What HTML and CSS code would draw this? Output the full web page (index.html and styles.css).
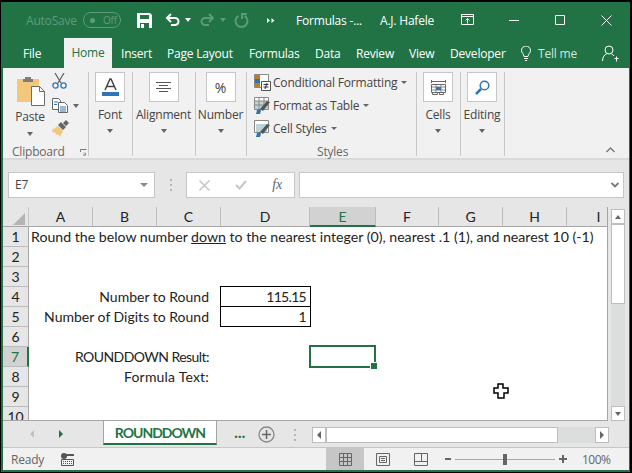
FILE: index.html
```html
<!DOCTYPE html>
<html lang="en">
<head>
    <meta charset="UTF-8">
    <title>Formulas - Excel</title>
    <link rel="stylesheet" href="styles.css">
</head>
<body>
<div class="window">

    <div class="titlebar">
        <span class="autosave">AutoSave</span>
        <span class="toggle"><i class="toggle-dot"></i>Off</span>
        <svg class="qat-save" width="15" height="15" viewBox="0 0 15 15"><path fill="#fff" d="M0 0h13l2 2v13H0z"/><path fill="#217346" d="M3 2h9v4H3zM3 10h9v5H3z"/><path fill="#fff" d="M4 11h3v4H4z"/></svg>
        <svg class="qat-undo" width="15" height="14" viewBox="0 0 15 14"><path fill="none" stroke="#fff" stroke-width="2" d="M2 5h8a3.5 3.5 0 0 1 0 7H6"/><path fill="none" stroke="#fff" stroke-width="2" d="M6 1L2 5l4 4"/></svg>
        <i class="caret white qat-caret"></i>
        <svg class="qat-redo" width="15" height="14" viewBox="0 0 15 14"><path fill="none" stroke="#5c9a78" stroke-width="2" d="M13 5H5a3.5 3.5 0 0 0 0 7h4"/><path fill="none" stroke="#5c9a78" stroke-width="2" d="M9 1l4 4-4 4"/></svg>
        <i class="caret dim qat-caret"></i>
        <svg class="qat-repeat" width="15" height="15" viewBox="0 0 15 15"><path fill="none" stroke="#5c9a78" stroke-width="2" d="M10.5 2.8a6 6 0 1 1-6 0"/><path fill="#5c9a78" d="M7 0h6v2H9v4H7z"/></svg>
        <svg class="qat-more" width="8" height="7" viewBox="0 0 8 7"><path fill="#fff" d="M0 1l3 2.5L0 6zM4.5 1l3 2.5-3 2.5z"/></svg>
        <span class="doc-name">Formulas -...</span>
        <span class="user-name">A.J. Hafele</span>
        <svg class="win-ribbon" width="14" height="12" viewBox="0 0 14 12"><path fill="none" stroke="#fff" d="M.5.5h12v10H.5zM.5 2.5h12M6.5 9.5V4.5M4.5 6.5l2-2 2 2"/></svg>
        <svg class="win-min" width="10" height="10" viewBox="0 0 10 10"><path stroke="#fff" d="M0 5.5h10"/></svg>
        <svg class="win-max" width="11" height="11" viewBox="0 0 11 11"><path fill="none" stroke="#fff" d="M.5.5h9v9h-9z"/></svg>
        <svg class="win-close" width="11" height="11" viewBox="0 0 11 11"><path stroke="#fff" d="M.5.5l10 10M10.5.5l-10 10"/></svg>
    </div>

    <div class="tabs">
        <span class="tab tab-file">File</span>
        <span class="tab tab-home">Home</span>
        <span class="tab tab-insert">Insert</span>
        <span class="tab tab-layout">Page Layout</span>
        <span class="tab tab-formulas">Formulas</span>
        <span class="tab tab-data">Data</span>
        <span class="tab tab-review">Review</span>
        <span class="tab tab-view">View</span>
        <span class="tab tab-dev">Developer</span>
        <svg class="bulb" width="10" height="15" viewBox="0 0 10 15"><path fill="none" stroke="#fff" d="M3 10.5C3 8 .5 7 .5 4.5a4.5 4.5 0 0 1 9 0C9.5 7 7 8 7 10.5zM3 12.5h4M4 14.5h2"/></svg>
        <span class="tab tab-tell">Tell me</span>
        <svg class="share" width="17" height="17" viewBox="0 0 17 17"><circle cx="7" cy="5" r="4" fill="none" stroke="#fff"/><path fill="none" stroke="#fff" d="M.5 16c0-4 2-6.5 4-7M9.5 9c1 .3 2 1 2.5 2M12.5 13.5h4M14.5 11.5v5"/></svg>
    </div>

    <div class="ribbon">
        <div class="group group-clip">
            <div class="clip-body">
                <div class="paste">
                    <svg width="29" height="30" viewBox="0 0 29 30">
                        <path fill="#f3c77c" d="M1 3h22v23H1z"/>
                        <path fill="#7d7d7d" d="M7 3h2V1h6v2h2v3H7z"/>
                        <path fill="#fff" stroke="#6d6d6d" d="M15.5 10.5h8l5 5v14h-13z"/>
                        <path fill="none" stroke="#6d6d6d" d="M23.5 10.5v5h5"/>
                    </svg>
                    <span class="paste-label">Paste</span>
                    <i class="caret"></i>
                </div>
                <div class="clip-tools">
                    <svg width="15" height="16" viewBox="0 0 15 16"><path fill="none" stroke="#666" stroke-width="1.3" d="M3 0l6 10M12 0L6 10"/><circle cx="3.5" cy="12.5" r="2.6" fill="none" stroke="#2e75b5" stroke-width="1.3"/><circle cx="11.5" cy="12.5" r="2.6" fill="none" stroke="#2e75b5" stroke-width="1.3"/></svg>
                    <div class="copy-row">
                        <svg width="16" height="15" viewBox="0 0 16 15"><path fill="#fff" stroke="#666" d="M.5.5h6l2 2v9h-8z"/><path fill="#fff" stroke="#666" d="M6.5 4.5h6l3 3v7h-9z"/><path stroke="#2e75b5" d="M2 4h4M2 6.5h3M8 9h6M8 11h6M8 13h6"/></svg>
                        <i class="caret copy-caret"></i>
                    </div>
                    <svg width="17" height="17" viewBox="0 0 17 17"><path fill="#f3c77c" d="M0 10l6-4 5 5-3 6-2-3-2 1-1-3-2 1z"/><path fill="#666" d="M6 5l3-3 5 5-3 3zM11 3l3-3 3 3-3 3z"/></svg>
                </div>
            </div>
            <div class="group-label clip-label">Clipboard<svg class="launcher" width="7" height="7" viewBox="0 0 7 7"><path fill="none" stroke="#777" d="M.5 3V.5H6.5"/><path fill="#777" d="M3 3l3 3V3.5L5 4.5 3.5 3zM6 6.5H3v-1h3z"/></svg></div>
        </div>

        <div class="group group-font">
            <div class="big-button">
                <svg width="17" height="18" viewBox="0 0 17 18"><path fill="none" stroke="#444" stroke-width="1.5" d="M3 12L8 1h1l5 11M5 8.5h7"/><path fill="#2e75b5" d="M0 14h17v4H0z"/></svg>
            </div>
            <span class="big-label">Font</span>
            <i class="caret"></i>
        </div>

        <div class="group group-align">
            <div class="big-button">
                <svg width="15" height="11" viewBox="0 0 15 11"><path stroke="#555" d="M0 .5h15M3 3.5h9M0 6.5h15M3 9.5h9"/></svg>
            </div>
            <span class="big-label">Alignment</span>
            <i class="caret"></i>
        </div>

        <div class="group group-number">
            <div class="big-button percent">%</div>
            <span class="big-label">Number</span>
            <i class="caret"></i>
        </div>

        <div class="group group-styles">
            <div class="style-row">
                <svg width="17" height="17" viewBox="0 0 17 17"><path fill="#fff" stroke="#888" d="M.5.5h14v13H.5z"/><path fill="#c8791f" d="M1 1h5v4H1zM1 9h5v4H1z"/><path fill="#2e75b5" d="M1 5h5v4H1z"/><path fill="#fff" stroke="#555" d="M7.5 7.5h9v9h-9z"/><path stroke="#333" d="M9.5 10.5h5M9.5 13h5M13 9l-2 6"/></svg>
                <span>Conditional Formatting</span><i class="caret"></i>
            </div>
            <div class="style-row">
                <svg width="17" height="17" viewBox="0 0 17 17"><path fill="#fff" stroke="#888" d="M.5.5h14v12H.5z"/><path fill="#bcd4d8" d="M1 4h13v8H1z"/><path stroke="#888" d="M5 1v11M10 1v11M1 4h13M1 8h13"/><path fill="#2e75b5" d="M2 17l1-4 3-1 1 2-1 3z"/><path fill="#555" d="M6 12l7-8 3 1-7 9z"/></svg>
                <span>Format as Table</span><i class="caret"></i>
            </div>
            <div class="style-row">
                <svg width="17" height="17" viewBox="0 0 17 17"><path fill="#fff" stroke="#888" d="M.5.5h14v12H.5z"/><path fill="#bcd4d8" d="M2 4h11v8H2z"/><path fill="#2e75b5" d="M2 17l1-4 3-1 1 2-1 3z"/><path fill="#555" d="M6 12l7-8 3 1-7 9z"/></svg>
                <span>Cell Styles</span><i class="caret"></i>
            </div>
            <div class="group-label styles-label">Styles</div>
        </div>

        <div class="group group-cells">
            <div class="big-button">
                <svg width="15" height="15" viewBox="0 0 15 15"><path stroke="#2e75b5" d="M.5 0v3M14.5 0v3M1 1.5h13"/><path fill="#fff" stroke="#666" d="M.5 4.5h14v8H.5z"/><path stroke="#888" d="M5 5v7M10 5v7M1 7h13M1 10h13"/><path fill="#2e75b5" d="M5 7h5v3H5z"/><path fill="none" stroke="#666" d="M1.5 12.5v2h5v-2M8.5 12.5v2h4v-2"/></svg>
            </div>
            <span class="big-label">Cells</span>
            <i class="caret"></i>
        </div>

        <div class="group group-edit">
            <div class="big-button">
                <svg width="15" height="15" viewBox="0 0 15 15"><circle cx="9.5" cy="5.5" r="4.3" fill="none" stroke="#2e75b5" stroke-width="1.5"/><path stroke="#2e75b5" stroke-width="2.5" d="M6 9l-5 5"/></svg>
            </div>
            <span class="big-label">Editing</span>
            <i class="caret"></i>
        </div>

        <div class="collapse">
            <svg width="9" height="6" viewBox="0 0 9 6"><path fill="none" stroke="#777" stroke-width="1.4" d="M.5 5l4-4 4 4"/></svg>
        </div>
    </div>

    <div class="formula-band">
        <div class="name-box">E7<i class="caret name-caret"></i></div>
        <div class="grip"></div>
        <div class="fx-box">
            <svg width="11" height="11" viewBox="0 0 11 11"><path stroke="#c6c6c6" stroke-width="1.5" d="M.5.5l10 10M10.5.5l-10 10"/></svg>
            <svg width="12" height="10" viewBox="0 0 12 10"><path fill="none" stroke="#c6c6c6" stroke-width="2" d="M1 5l3.5 3.5L11 1"/></svg>
            <span class="fx">fx</span>
        </div>
        <div class="formula-input">
            <svg width="8" height="6" viewBox="0 0 8 6"><path fill="none" stroke="#777" stroke-width="1.8" d="M.5 1L4 4.5 7.5 1"/></svg>
        </div>
    </div>

    <div class="sheet-area">
        <div class="sheet">
            <div class="corner"><i class="corner-mark"></i></div>
            <div class="col">A</div>
            <div class="col">B</div>
            <div class="col">C</div>
            <div class="col">D</div>
            <div class="col col-on">E</div>
            <div class="col">F</div>
            <div class="col">G</div>
            <div class="col">H</div>
            <div class="col">I</div>

            <div class="row">1</div>
            <div class="cell span-all heading">Round the below number <u>down</u> to the nearest integer (0), nearest .1 (1), and nearest 10 (-1)</div>

            <div class="row">2</div>
            <div class="cell span-all"></div>
            <div class="row">3</div>
            <div class="cell span-all"></div>

            <div class="row">4</div>
            <div class="cell label">Number to Round</div>
            <div class="cell boxed box-top">115.15</div>
            <div class="cell rest"></div>

            <div class="row">5</div>
            <div class="cell label">Number of Digits to Round</div>
            <div class="cell boxed">1</div>
            <div class="cell rest"></div>

            <div class="row">6</div>
            <div class="cell span-all"></div>

            <div class="row row-on">7</div>
            <div class="cell label caps">ROUNDDOWN Result:</div>
            <div class="cell"></div>
            <div class="cell active"><i class="handle"></i></div>
            <div class="cell rest-f"></div>

            <div class="row">8</div>
            <div class="cell label wide">Formula Text:</div>
            <div class="cell span-rest"></div>

            <div class="row">9</div>
            <div class="cell span-all"></div>
            <div class="row">10</div>
            <div class="cell span-all"></div>

            <svg class="pointer" width="16" height="16" viewBox="0 0 16 16"><path fill="#fff" stroke="#000" stroke-width="1.5" d="M5 1h5v4h5v5h-4v5H5v-5H1V5h4z"/></svg>
        </div>

        <div class="vscroll">
            <div class="sb-btn sb-up"><i class="caret up"></i></div>
            <div class="sb-thumb"></div>
            <div class="sb-btn sb-down"><i class="caret"></i></div>
        </div>
    </div>

    <div class="sheet-tabs">
        <i class="arrow-left dim-arrow"></i>
        <i class="arrow-right"></i>
        <div class="sheet-tab">ROUNDDOWN</div>
        <span class="more-tabs">...</span>
        <svg class="add-sheet" width="17" height="17" viewBox="0 0 17 17"><circle cx="8.5" cy="8.5" r="7.5" fill="none" stroke="#888" stroke-width="1.3"/><path stroke="#666" stroke-width="1.5" d="M8.5 4v9M4 8.5h9"/></svg>
        <div class="grip grip-tabs"></div>
        <div class="hscroll">
            <div class="hs-btn"><i class="arrow-left"></i></div>
            <div class="hs-thumb"></div>
            <div class="hs-btn hs-end"><i class="arrow-right"></i></div>
        </div>
    </div>

    <div class="status">
        <span class="ready">Ready</span>
        <svg class="macro" width="13" height="13" viewBox="0 0 13 13"><circle cx="3" cy="3" r="3" fill="#555"/><path fill="#555" d="M5 1h8v2H5z"/><path fill="none" stroke="#555" d="M.5 6.5h12v6H.5z"/><path stroke="#555" stroke-dasharray="1 1" d="M2 8.5h10M2 10.5h10"/></svg>
        <div class="view-on">
            <svg width="13" height="13" viewBox="0 0 13 13"><path fill="none" stroke="#666" d="M.5.5h12v12H.5zM4.5 1v12M8.5 1v12M1 4.5h12M1 8.5h12"/></svg>
        </div>
        <svg class="view-page" width="14" height="13" viewBox="0 0 14 13"><path fill="none" stroke="#666" d="M.5.5h13v12H.5zM3.5 3.5h7v6h-7zM5 5.5h4M5 7.5h4"/></svg>
        <svg class="view-break" width="14" height="13" viewBox="0 0 14 13"><path fill="none" stroke="#666" d="M.5.5h13v12H.5zM.5 8.5h13M7.5 1v7"/></svg>
        <span class="zoom-minus"></span>
        <div class="zoom-track"><i class="zoom-thumb"></i></div>
        <span class="zoom-plus"></span>
        <span class="zoom-value">100%</span>
    </div>

</div>
</body>
</html>
```

FILE: styles.css
```css
* {
    box-sizing: border-box;
}

body {
    margin: 0;
    width: 632px;
    height: 473px;
    background: #000;
    overflow: hidden;
    font-family: "Open Sans", "Noto Sans", sans-serif;
    font-size: 12px;
    letter-spacing: -0.2px;
    color: #444;
}

i {
    display: block;
}

svg {
    flex: none;
}

.window {
    margin: 2px 2px 0 1px;
    height: 470px;
    border-left: 2px solid #217346;
    border-right: 1px solid #217346;
    border-bottom: 2px solid #217346;
    display: flex;
    flex-direction: column;
    background: #e6e6e6;
}

.caret {
    width: 0;
    height: 0;
    border-left: 3.5px solid transparent;
    border-right: 3.5px solid transparent;
    border-top: 4px solid #666;
}

.caret.up {
    border-top: 0;
    border-bottom: 4px solid #666;
}

.caret.white {
    border-top-color: #fff;
}

.caret.dim {
    border-top-color: #5c9a78;
}

/* title bar */
.titlebar {
    height: 36px;
    flex: none;
    background: #217346;
    color: #fff;
    display: flex;
    align-items: center;
    padding-left: 23px;
    white-space: nowrap;
}

.autosave {
    color: #5f9a7a;
    width: 57px;
    flex: none;
}

.toggle {
    width: 38px;
    height: 16px;
    flex: none;
    border: 1px solid #5f9a7a;
    border-radius: 8px;
    color: #5f9a7a;
    font-size: 10px;
    line-height: 14px;
    display: flex;
    align-items: center;
    gap: 8px;
    padding-left: 6px;
}

.toggle-dot {
    width: 5px;
    height: 5px;
    border-radius: 50%;
    background: #5f9a7a;
}

.qat-save {
    margin-left: 16px;
}

.qat-undo {
    margin-left: 13px;
}

.qat-caret {
    margin-left: 5px;
}

.qat-redo {
    margin-left: 9px;
}

.qat-repeat {
    margin-left: 8px;
}

.qat-more {
    margin-left: 18px;
}

.doc-name {
    margin-left: 21px;
    width: 84px;
    flex: none;
}

.user-name {
    width: 81px;
    flex: none;
}

.win-min {
    margin-left: 34px;
}

.win-max {
    margin-left: 36px;
}

.win-close {
    margin-left: 35px;
}

/* ribbon tabs */
.tabs {
    height: 30px;
    flex: none;
    background: #217346;
    color: #fff;
    display: flex;
    align-items: center;
    white-space: nowrap;
}

.tab {
    display: block;
    flex: none;
    text-align: center;
}

.tab-file {
    margin-left: 20px;
    width: 18px;
}

.tab-home {
    margin-left: 23px;
    width: 48px;
    height: 30px;
    line-height: 30px;
    background: #f1f1f1;
    color: #217346;
}

.tab-insert {
    margin-left: 9px;
    width: 29px;
}

.tab-layout {
    margin-left: 17px;
    width: 65px;
}

.tab-formulas {
    margin-left: 17px;
    width: 49px;
}

.tab-data {
    margin-left: 17px;
    width: 24px;
}

.tab-review {
    margin-left: 17px;
    width: 37px;
}

.tab-view {
    margin-left: 16px;
    width: 25px;
}

.tab-dev {
    margin-left: 16px;
    width: 53px;
}

.bulb {
    margin-left: 18px;
}

.tab-tell {
    margin-left: 7px;
    width: 39px;
    color: #d5e5dc;
}

.share {
    margin-left: 25px;
}

/* ribbon */
.ribbon {
    height: 92px;
    flex: none;
    background: #f1f1f1;
    border-bottom: 2px solid #d9d9d9;
    display: flex;
    padding-top: 4px;
    color: #444;
}

.group {
    height: 84px;
    flex: none;
    border-right: 1px solid #c8c8c8;
    display: flex;
    flex-direction: column;
    align-items: center;
    padding-right: 1px;
}

.group-clip {
    width: 86px;
    align-items: flex-start;
}

.group-font,
.group-cells,
.group-edit {
    width: 44px;
}

.group-align {
    width: 63px;
}

.group-number {
    width: 51px;
}

.group-styles {
    width: 170px;
    align-items: flex-start;
    padding: 0 0 0 7px;
}

.big-button {
    width: 30px;
    height: 30px;
    flex: none;
    background: #fff;
    border: 1px solid #c6c6c6;
    display: flex;
    align-items: center;
    justify-content: center;
}

.percent {
    font-size: 14px;
}

.big-label {
    margin-top: 4px;
    line-height: 17px;
    white-space: nowrap;
}

.group .caret {
    flex: none;
}

.big-label + .caret {
    margin-top: 6px;
}

.clip-body {
    display: flex;
    flex: none;
    height: 72px;
    padding-left: 9px;
}

.paste {
    width: 36px;
    display: flex;
    flex-direction: column;
    align-items: center;
    padding-top: 4px;
}

.paste-label {
    line-height: 16px;
    margin-top: 3px;
}

.paste .caret {
    margin-top: 7px;
}

.clip-tools {
    display: flex;
    flex-direction: column;
    align-items: flex-start;
    margin-left: 4px;
    padding-top: 1px;
    gap: 8px;
}

.copy-row {
    display: flex;
    align-items: center;
    margin: 1px 0 -1px;
}

.copy-caret {
    margin-left: 5px;
}

.group-label {
    color: #666;
    line-height: 16px;
    flex: none;
}

.clip-label {
    width: 100%;
    padding-left: 9px;
    display: flex;
    align-items: center;
    gap: 15px;
}

.styles-label {
    margin: 4px 0 0 63px;
}

.style-row {
    height: 23px;
    flex: none;
    display: flex;
    align-items: center;
    gap: 2px;
    white-space: nowrap;
}

.style-row:first-child {
    margin-top: -1px;
}

.style-row .caret {
    margin-left: 2px;
    border-left-width: 3px;
    border-right-width: 3px;
    border-top-width: 3px;
}

.collapse {
    flex: 1;
    display: flex;
    justify-content: flex-end;
    align-items: flex-end;
    height: 84px;
    padding: 0 14px 3px 0;
}

/* formula bar */
.formula-band {
    height: 47px;
    flex: none;
    display: flex;
    align-items: flex-start;
    padding: 12px 5px 0 5px;
    background: #e6e6e6;
}

.name-box {
    width: 147px;
    height: 26px;
    background: #fff;
    border: 1px solid #c6c6c6;
    padding-left: 6px;
    line-height: 24px;
    font-size: 12px;
    color: #444;
    display: flex;
    align-items: center;
    justify-content: space-between;
    padding-right: 6px;
}

.name-caret {
    border-top-color: #888;
    border-left-width: 4px;
    border-right-width: 4px;
}

.grip {
    width: 2px;
    height: 12px;
    margin: 7px 14px 0 15px;
    background: repeating-linear-gradient(#b5b5b5 0 2px, transparent 2px 5px);
}

.fx-box {
    width: 109px;
    height: 26px;
    background: #fff;
    border: 1px solid #c6c6c6;
    display: flex;
    align-items: center;
    justify-content: space-between;
    padding: 0 12px;
}

.fx {
    font-family: "Liberation Serif", serif;
    font-style: italic;
    font-size: 14px;
    color: #666;
}

.formula-input {
    width: 325px;
    height: 26px;
    margin-left: 4px;
    background: #fff;
    border: 1px solid #c6c6c6;
    display: flex;
    align-items: center;
    justify-content: flex-end;
    padding-right: 4px;
}

/* sheet */
.sheet-area {
    height: 214px;
    flex: none;
    display: flex;
    align-items: stretch;
}

.sheet {
    position: relative;
    width: 605px;
    height: 214px;
    overflow: hidden;
    background: #fff;
    border-right: 1px solid #a6a6a6;
    border-bottom: 1px solid #a6a6a6;
    display: grid;
    grid-template-columns: 26px 64px 64px 64px 89px 66px 63px 64px 64px 64px;
    grid-auto-rows: 20px;
    font-family: Lato, "Liberation Sans", sans-serif;
    font-size: 14px;
    letter-spacing: 0;
    color: #222;
}

.corner {
    background: #e6e6e6;
    border-bottom: 1px solid #a6a6a6;
    border-right: 1px solid #c6c6c6;
    display: flex;
    justify-content: flex-end;
    align-items: flex-end;
    padding: 0 3px 1px 0;
}

.corner-mark {
    width: 0;
    height: 0;
    border-left: 12px solid transparent;
    border-bottom: 12px solid #b4b4b4;
}

.col {
    background: #e6e6e6;
    border-bottom: 1px solid #a6a6a6;
    border-right: 1px solid #bcbcbc;
    text-align: center;
    line-height: 19px;
}

.col-on {
    background: #d2d2d2;
    color: #217346;
    border-bottom: 2px solid #217346;
}

.row {
    background: #e6e6e6;
    border-bottom: 1px solid #bcbcbc;
    border-right: 1px solid #a6a6a6;
    text-align: center;
    line-height: 20px;
    grid-column: 1;
}

.row-on {
    background: #d2d2d2;
    color: #217346;
    border-right: 2px solid #217346;
}

.cell {
    line-height: 20px;
    white-space: nowrap;
    padding: 0 2px;
}

.heading {
    font-size: 14.15px;
}

.span-all {
    grid-column: 2 / -1;
}

.label {
    grid-column: 2 / 5;
    text-align: right;
    padding-right: 12px;
}

.caps {
    letter-spacing: -0.55px;
}

.wide {
    letter-spacing: 0.2px;
}

.boxed {
    grid-column: 5;
    border: 1px solid #000;
    border-top: 0;
    text-align: right;
    margin: 0 -1px 0 -1px;
    padding-right: 4px;
    letter-spacing: -0.7px;
}

.box-top {
    border-top: 1px solid #000;
    margin-top: -1px;
    height: 21px;
}

.rest {
    grid-column: 6 / -1;
}

.active {
    grid-column: 6;
    position: relative;
    border: 2px solid #217346;
    margin: -2px 0 0 -1px;
    height: 23px;
}

.handle {
    position: absolute;
    right: -3px;
    bottom: -3px;
    width: 6px;
    height: 6px;
    background: #217346;
    border: 1px solid #fff;
    box-sizing: content-box;
    margin: -1px;
}

.rest-f {
    grid-column: 7 / -1;
}

.span-rest {
    grid-column: 5 / -1;
}

.pointer {
    position: absolute;
    left: 490px;
    top: 176px;
}

/* scrollbars */
.vscroll {
    flex: 1;
    display: flex;
    flex-direction: column;
    margin: 2px 4px 0 3px;
    background: #dcdedd;
}

.sb-btn {
    height: 15px;
    flex: none;
    background: #fff;
    border: 1px solid #bdbdbd;
    display: flex;
    align-items: center;
    justify-content: center;
}

.sb-thumb {
    height: 80px;
    background: #fff;
    border: 1px solid #bdbdbd;
}

.sb-down {
    margin-top: auto;
}

.sheet-tabs {
    height: 27px;
    flex: none;
    display: flex;
    align-items: flex-start;
    background: #e6e6e6;
    border-bottom: 1px solid #c6c6c6;
}

.arrow-left,
.arrow-right {
    width: 0;
    height: 0;
    border-top: 4px solid transparent;
    border-bottom: 4px solid transparent;
}

.arrow-left {
    border-right: 4px solid #666;
}

.arrow-right {
    border-left: 4px solid #666;
}

.sheet-tabs > .arrow-left {
    margin: 9px 0 0 27px;
    border-right-color: #c0c0c0;
}

.sheet-tabs > .arrow-right {
    margin: 9px 0 0 25px;
    border-left-color: #217346;
}

.sheet-tab {
    width: 114px;
    height: 24px;
    margin-left: 40px;
    background: #fff;
    border: 1px solid #a6a6a6;
    border-top: 0;
    border-bottom: 2px solid #217346;
    color: #217346;
    font-family: Lato, "Liberation Sans", sans-serif;
    font-weight: bold;
    font-size: 14px;
    letter-spacing: -1px;
    line-height: 23px;
    text-align: center;
}

.more-tabs {
    width: 12px;
    margin: 3px 0 0 17px;
    color: #217346;
    font-weight: bold;
    font-size: 14px;
    line-height: 18px;
}

.add-sheet {
    margin: 5px 0 0 12px;
}

.grip-tabs {
    margin: 8px 16px 0 19px;
}

.hscroll {
    width: 297px;
    height: 16px;
    margin-top: 6px;
    display: flex;
    background: #dcdedd;
}

.hs-btn {
    width: 14px;
    flex: none;
    background: #fff;
    border: 1px solid #bdbdbd;
    display: flex;
    align-items: center;
    justify-content: center;
}

.hs-thumb {
    width: 232px;
    background: #fff;
    border: 1px solid #bdbdbd;
}

.hs-end {
    margin-left: auto;
}

/* status bar */
.status {
    height: 22px;
    flex: none;
    background: #f1f1f1;
    display: flex;
    align-items: center;
    color: #666;
}

.ready {
    margin-left: 8px;
    width: 50px;
    flex: none;
}

.view-on {
    width: 38px;
    height: 22px;
    margin-left: 252px;
    background: #c6c6c6;
    display: flex;
    align-items: center;
    justify-content: center;
}

.view-page {
    margin-left: 12px;
}

.view-break {
    margin-left: 24px;
}

.zoom-minus {
    width: 6px;
    height: 2px;
    margin-left: 17px;
    background: #666;
}

.zoom-track {
    width: 100px;
    height: 1px;
    margin-left: 4px;
    background: #a6a6a6;
    display: flex;
    align-items: center;
    justify-content: center;
}

.zoom-thumb {
    width: 4px;
    height: 11px;
    flex: none;
    background: #666;
}

.zoom-plus {
    width: 8px;
    height: 8px;
    margin-left: 4px;
    background: linear-gradient(#666, #666) center / 8px 2px no-repeat, linear-gradient(#666, #666) center / 2px 8px no-repeat;
}

.zoom-value {
    margin-left: 15px;
    letter-spacing: -0.5px;
}
```
